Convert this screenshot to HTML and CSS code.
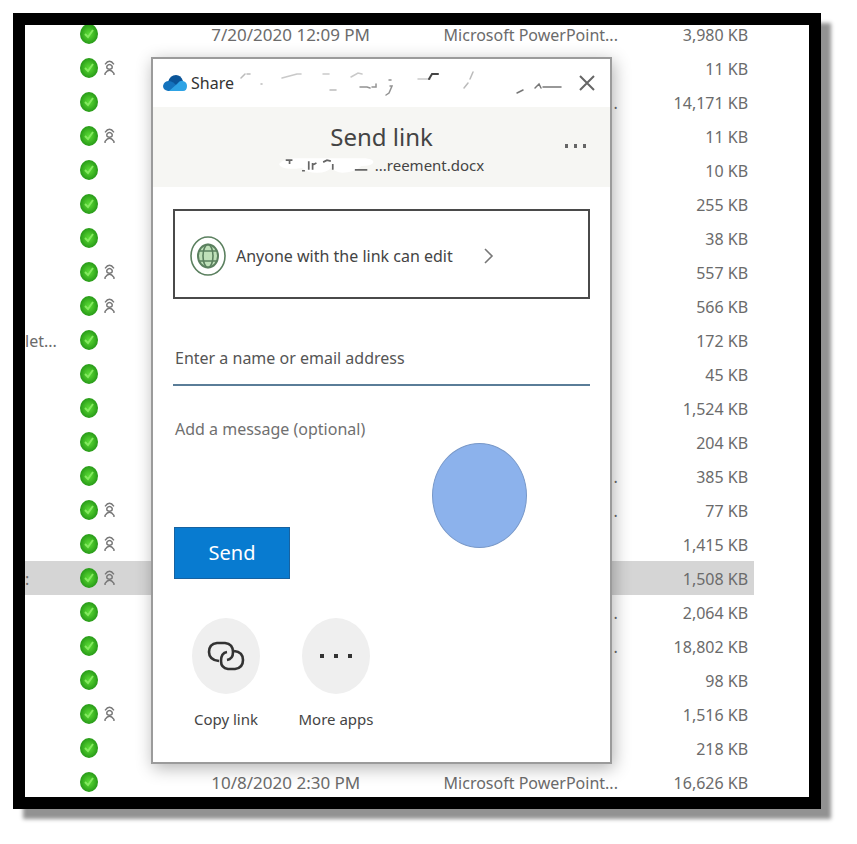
FILE: index.html
```html
<!DOCTYPE html>
<html lang="en">
<head>
<meta charset="utf-8">
<title>Send link</title>
<link rel="stylesheet" href="styles.css">
</head>
<body>
<svg class="defs" aria-hidden="true">
  <defs>
    <radialGradient id="green"><stop offset="0" stop-color="#5bdc38"/><stop offset=".5" stop-color="#43bd26"/><stop offset="1" stop-color="#279a18"/></radialGradient>
    <symbol id="synced" viewBox="0 0 20 22"><ellipse cx="10" cy="11" rx="9" ry="10" fill="url(#green)"/><path d="M6 11l3 3 5-7" fill="none" stroke="#85ea60" stroke-width="2"/></symbol>
    <symbol id="person" viewBox="0 0 14 18"><path d="M2 5q5-7 10 0M4 7q3-4 6 0v2q-3 3-6 0zM2 17v-2q5-7 10 0v2" fill="none" stroke="#777" stroke-width="1.6"/></symbol>
  </defs>
</svg>
<main class="frame">
  <table class="files">
    <colgroup><col class="c-name"><col class="c-status"><col class="c-date"><col class="c-type"><col class="c-size"></colgroup>
    <tbody id="rows"></tbody>
  </table>
  <section class="dialog" role="dialog" aria-labelledby="title">
    <div class="titlebar">
      <svg class="cloud" viewBox="0 0 24 18" aria-hidden="true"><path d="M5 8Q7 1 13 1q5 0 7 6l-7 5z" fill="#0b5599"/><path d="M5 17q-5-1-5-5 1-5 6-5 4 0 9 6l-4 4z" fill="#1473bd"/><path d="M6 17l8-7q3-4 6-3 4 1 4 5 0 5-4 5z" fill="#2ea3e5"/></svg>
      <span class="app">Share</span>
      <svg class="smudge" viewBox="0 0 340 36" aria-hidden="true"><g fill="none" stroke="#777" stroke-width="1.5" stroke-linecap="round"><path d="M5 13l4-4m2 0h3M25 19h1M94 25h6" opacity=".5"/><path d="M46 13l15-4m0 0h4M87 9h6M115 12l7-4 4 1M182 14h12" opacity=".4"/><path d="M124 22h7l3 1m2-1h4v-3M153 15h2m-1 6h2l-3 7-3 2" opacity=".8"/><path d="M193 14l3-5h6" stroke="#444" stroke-width="2"/><path d="M237 7l-3 7M232 18l-4 5" opacity=".5"/><path d="M281 28l6-3M299 23l4-4 2 4m2-1h18"/></g></svg>
      <button class="close" aria-label="Close"><svg viewBox="0 0 18 20"><path d="M2 3l14 14M16 3L2 17" fill="none" stroke="#666" stroke-width="2"/></svg></button>
    </div>
    <header class="head">
      <h1 id="title">Send link</h1>
      <p class="file"><svg class="patch" viewBox="0 0 100 24" aria-hidden="true"><path d="M0 11Q4 5 20 5h70q10 1 8 5-2 3-12 3-8 7-20 7-8-1-12-5-4 5-14 5-12 0-16-5Q2 18 0 11z" fill="#fff"/><g fill="none" stroke="#666" stroke-width="1.8"><path d="M7 7h7m-3 0v4M24 18h3M31 8v9m4 0V10m0 2l4-2M46 9l4-2 4 1m2 3v6M79 17h13"/></g></svg><span>...reement.docx</span></p>
      <button class="options" aria-label="More options"><svg viewBox="0 0 24 6"><path d="M1 1h3v4H1zM10 1h3v4h-3zM19 1h3v4h-3z" fill="#666"/></svg></button>
    </header>
    <form class="body">
      <button type="button" class="scope">
        <svg class="globe" viewBox="0 0 36 40" aria-hidden="true"><g fill="none" stroke="#5b805f" stroke-width="1.6"><ellipse cx="18" cy="20" rx="17" ry="19"/><ellipse cx="18" cy="20" rx="10" ry="11.5" fill="#bfe0b9" stroke-width="2"/><ellipse cx="18" cy="20" rx="5" ry="11.5"/><path d="M9 15h18M9 25h18"/></g></svg>
        <span>Anyone with the link can edit</span>
        <svg class="chevron" viewBox="0 0 10 16" aria-hidden="true"><path d="M1 1l7 7-7 7" fill="none" stroke="#777" stroke-width="1.6"/></svg>
      </button>
      <input class="email" type="text" aria-label="Recipient" placeholder="Enter a name or email address">
      <textarea class="message" aria-label="Message" placeholder="Add a message (optional)"></textarea>
      <button type="button" class="send">Send</button>
      <div class="actions">
        <button type="button" class="action"><span class="disc"><svg class="link" viewBox="0 0 38 30"><g fill="none" stroke="#333" stroke-width="2.6"><path d="M12 20Q2 19 2 11q0-8 8-9h8q8 1 8 9 0 7-6 8"/><path d="M27 10q9 1 9 9 0 8-8 9h-7q-7-1-7-8 0-8 6-9"/></g></svg></span>Copy link</button>
        <button type="button" class="action"><span class="disc"><svg class="dots" viewBox="0 0 34 6"><path d="M1 1h4v4H1zM15 1h4v4h-4zM29 1h4v4h-4z" fill="#333"/></svg></span>More apps</button>
      </div>
    </form>
    <span class="pointer"></span>
  </section>
</main>
<script src="rows.js"></script>
</body>
</html>
```
FILE: styles.css
```css
* { box-sizing: border-box; }
body { margin: 0; background: #fff; color: #444; font: 16px/24px "Noto Sans", "Open Sans", sans-serif; }
button, input, textarea { font: inherit; color: inherit; padding: 0; border: 0; background: none; border-radius: 0; }
svg { display: block; flex: none; }
.defs { position: absolute; width: 0; height: 0; }
.frame { display: flow-root; position: relative; margin: 13px 36px 35px 13px; border: 12px solid #000; background: #fff; box-shadow: 10px 10px 4px #929292; }
.files { width: 93%; margin: -8px 0 -2px; border-collapse: collapse; table-layout: fixed; color: #6b6b6b; clip-path: inset(8px 0 2px 0); }
.files td { height: 34px; padding: 2px 0 0; white-space: nowrap; }
.c-name { width: 7%; }
.c-status { width: 18%; }
.c-date { width: 32%; }
.c-type { width: 25%; }
.c-size { width: 18%; }
.files .name { overflow: hidden; }
.files .icons { padding: 0 0 0 3px; }
.status { display: flex; align-items: center; gap: 4px; }
.synced { width: 20px; height: 22px; }
.person { width: 13px; height: 16px; }
.files .date { padding-left: 4px; font-size: 17px; }
.files .type { padding-left: 3px; }
.files .size { text-align: right; padding-right: 6px; }
.files .tail { text-align: right; padding-right: 5px; }
.selected { background: #d5d5d5; }
.dialog { position: absolute; top: 32px; left: 126px; right: 197px; border: 2px solid #9b9b9b; background: #fff; box-shadow: 2px 4px 16px rgba(0,0,0,.3); padding-bottom: 31px; }
.titlebar { display: flex; align-items: center; height: 48px; padding: 0 14px 0 10px; }
.cloud { width: 24px; height: 18px; margin-right: 4px; }
.app { color: #333; }
.smudge { flex: 1; min-width: 0; height: 36px; }
.close { width: 18px; height: 20px; }
.head { position: relative; height: 80px; padding-top: 14px; background: #f6f6f3; text-align: center; }
h1 { margin: 0; font-size: 24px; line-height: 32px; font-weight: 400; color: #444; }
.file { display: flex; justify-content: center; align-items: center; margin: 0; line-height: 24px; font-size: 15px; }
.patch { width: 96px; height: 24px; }
.options { position: absolute; right: 22px; top: 36px; width: 24px; }
.body { padding: 22px 20px 0; }
.scope { display: flex; align-items: center; width: 100%; height: 90px; padding: 4px 0 0 15px; border: 2px solid #4a4a4a; }
.globe { width: 36px; height: 40px; margin-right: 10px; }
.chevron { width: 10px; height: 16px; margin-left: 31px; }
.email { display: block; width: 100%; height: 55px; margin-top: 32px; padding-left: 2px; border-bottom: 2px solid #5a7d98; outline: 0; }
.email::placeholder { color: #555; opacity: 1; }
.message { display: block; width: 100%; height: 110px; margin-top: 31px; padding-left: 2px; resize: none; outline: 0; }
.message::placeholder { color: #707070; opacity: 1; }
.send { display: block; width: 116px; height: 52px; margin-left: 1px; background: #087bd0; border: 1px solid #1762a0; color: #fff; font-size: 20px; }
.actions { display: flex; margin: 39px 0 0 -2px; }
.action { display: flex; flex-direction: column; align-items: center; width: 110px; gap: 13px; font-size: 15px; }
.disc { display: flex; align-items: center; justify-content: center; width: 68px; height: 76px; border-radius: 50%; background: #efefef; }
.link { width: 38px; height: 30px; }
.dots { width: 34px; }
.pointer { position: absolute; left: 279px; top: 384px; width: 95px; height: 105px; border: 1px solid #7898c8; border-radius: 50%; background: #8cb2ec; }
```
FILE: rows.js
```js
const sizes = ["3,980", "11", "14,171", "11", "10", "255", "38", "557", "566", "172", "45", "1,524", "204", "385", "77", "1,415", "1,508", "2,064", "18,802", "98", "1,516", "218", "16,626"];
const shared = [1, 3, 7, 8, 14, 15, 16, 20];
const tails = [2, 13, 14, 17, 18];
const dates = { 0: "7/20/2020 12:09 PM", 22: "10/8/2020 2:30 PM" };
const names = { 9: "let...", 16: ":" };

document.getElementById("rows").innerHTML = sizes.map((size, i) => {
  const person = shared.includes(i) ? '<svg class="person"><use href="#person"/></svg>' : "";
  const type = dates[i] ? '<td class="type">Microsoft PowerPoint...</td>' : `<td class="tail">${tails.includes(i) ? "." : ""}</td>`;
  return `<tr class="${i === 16 ? "selected" : ""}">
    <td class="name">${names[i] || ""}</td>
    <td class="icons"><div class="status"><svg class="synced"><use href="#synced"/></svg>${person}</div></td>
    <td class="date">${dates[i] || ""}</td>${type}
    <td class="size">${size} KB</td></tr>`;
}).join("");
```
